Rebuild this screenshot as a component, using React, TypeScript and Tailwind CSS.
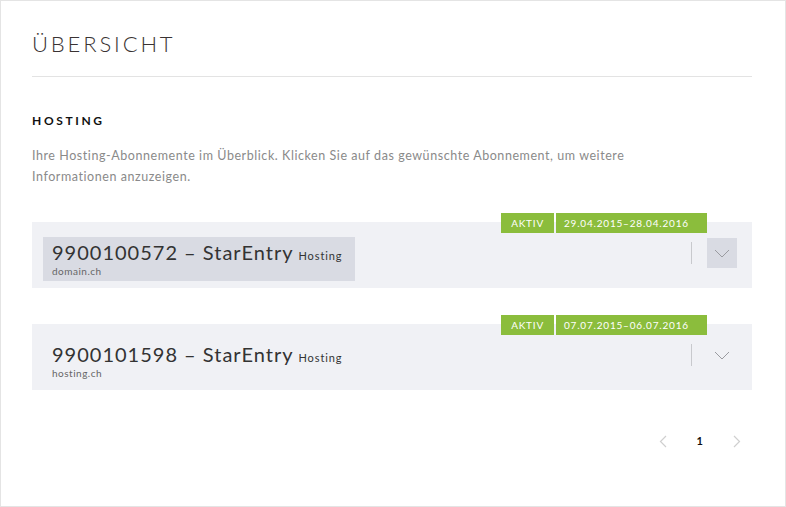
const font = { fontFamily: "Lato, 'Open Sans', sans-serif" };

type Sub = { id: string; name: string; domain: string; from: string; active: boolean };

const subs: Sub[] = [
  { id: "9900100572", name: "StarEntry", domain: "domain.ch", from: "29.04.2015–28.04.2016", active: true },
  { id: "9900101598", name: "StarEntry", domain: "hosting.ch", from: "07.07.2015–06.07.2016", active: false },
];

function Chevron({ className }: { className?: string }) {
  return (
    <svg width="16" height="9" viewBox="0 0 16 9" fill="none" className={className}>
      <path d="M1 1l7 7 7-7" stroke="currentColor" strokeWidth="1" />
    </svg>
  );
}

function SubRow({ sub }: { sub: Sub }) {
  return (
    <div className="relative flex h-[66px] items-start bg-[#f0f1f5] pt-[15px] pl-[11px] pr-[15px]">
      {/* status badges */}
      <div className="absolute right-[45px] top-[-9px] flex gap-[2px] text-[10px] leading-[20px] tracking-[0.08em] text-white">
        <span className="bg-[#8bbd3c] px-[10px]">AKTIV</span>
        <span className="w-[151px] bg-[#8bbd3c] pl-[8px]">{sub.from}</span>
      </div>

      <div className={`h-[44px] w-[312px] pl-[9px] pt-[4px] ${sub.active ? "bg-[#d9dbe3]" : ""}`}>
        <div className="flex items-baseline gap-[5px] text-[#333]">
          <span className="text-[20px] leading-[23px] tracking-[0.05em]">
            {sub.id} – {sub.name}
          </span>
          <span className="text-[11px] tracking-[0.08em]">Hosting</span>
        </div>
        <div className="text-[10px] leading-[12px] tracking-[0.05em] text-[#666]">{sub.domain}</div>
      </div>

      <div className="ml-auto mt-[1px] flex items-center gap-[15px]">
        <div className="h-[22px] w-px bg-[#c8c9cd]" />
        <div className={`flex h-[30px] w-[30px] items-center justify-center ${sub.active ? "bg-[#d9dbe3]" : ""}`}>
          <Chevron className="text-[#9a9ba0]" />
        </div>
      </div>
    </div>
  );
}

export default function App() {
  return (
    <div style={font} className="h-[507px] w-[786px] border border-[#e4e4e4] bg-white pl-[31px] pr-[33px]">
      <h1 className="pt-[32px] text-[22px] font-light leading-[22px] tracking-[0.13em] text-[#3a3333]">
        ÜBERSICHT
      </h1>
      <div className="mt-[21px] h-px bg-[#e3e3e3]" />

      <h2 className="mt-[37px] text-[12px] font-bold leading-[14px] tracking-[0.22em] text-[#111]">HOSTING</h2>
      <p className="mt-[17px] text-[12.5px] leading-[21px] tracking-[0.045em] text-[#8a8a8a]">
        Ihre Hosting-Abonnemente im Überblick. Klicken Sie auf das gewünschte Abonnement, um weitere
        <br />
        Informationen anzuzeigen.
      </p>

      <div className="mt-[35px] flex flex-col gap-[36px]">
        {subs.map((s) => (
          <SubRow key={s.id} sub={s} />
        ))}
      </div>

      <div className="mt-[43px] flex items-center justify-end gap-[30px] pr-[11px]">
        <svg width="8" height="13" viewBox="0 0 8 13" fill="none" className="text-[#cfcfcf]">
          <path d="M7 1L1.5 6.5 7 12" stroke="currentColor" strokeWidth="1.2" />
        </svg>
        <span className="text-[11px] font-bold text-[#111]">1</span>
        <svg width="8" height="13" viewBox="0 0 8 13" fill="none" className="text-[#cfcfcf]">
          <path d="M1 1l5.5 5.5L1 12" stroke="currentColor" strokeWidth="1.2" />
        </svg>
      </div>
    </div>
  );
}
